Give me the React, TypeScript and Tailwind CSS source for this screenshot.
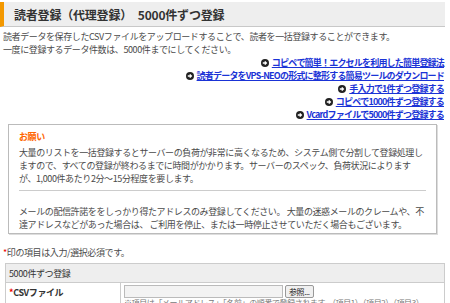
import React from "react";

const Bullet = () => (
  <svg width="8" height="8" viewBox="0 0 8 8" className="mr-[3px] shrink-0">
    <circle cx="4" cy="4" r="4" fill="#222" />
    <path d="M1.8 4 H5.2 M3.8 2.4 L5.4 4 L3.8 5.6" stroke="#fff" strokeWidth="1.3" fill="none" />
  </svg>
);

const links = [
  "コピペで簡単！エクセルを利用した簡単登録法",
  "読者データをVPS-NEOの形式に整形する簡易ツールのダウンロード",
  "手入力で1件ずつ登録する",
  "コピペで1000件ずつ登録する",
  "Vcardファイルで5000件ずつ登録する",
];

export default function App() {
  return (
    <div
      className="w-[450px] h-[303px] overflow-hidden bg-white text-[9px] leading-[13px] text-[#4a4a4a]"
      style={{ fontFamily: '"Noto Sans CJK JP", "Noto Sans", sans-serif' }}
    >
      <div className="mt-[2px] mr-[5px] h-[25px] bg-[#eeeeee] border-l-[4px] border-[#f39800] border-b border-b-[#c8c8c8] flex items-center pl-[10px]">
        <span className="text-[12px] font-bold text-[#333] tracking-[-0.2px]">
          読者登録（代理登録）　5000件ずつ登録
        </span>
      </div>
      <div className="px-[3px] mt-[3px] tracking-[-0.4px]">
        <div>読者データを保存したCSVファイルをアップロードすることで、読者を一括登録することができます。</div>
        <div>一度に登録するデータ件数は、5000件までにしてください。</div>
      </div>
      <div className="flex flex-col items-end pr-[6px] tracking-[-0.8px]">
        {links.map((l) => (
          <div key={l} className="flex items-center">
            <Bullet />
            <a className="text-[#1a33d6] font-bold underline">{l}</a>
          </div>
        ))}
      </div>
      <div className="ml-[8px] mr-[13px] mt-[3px] border border-[#bbb] shadow-[1px_1px_0_#ddd] px-[10px] pt-[5px] pb-[2px] tracking-[-0.4px]">
        <div className="text-[#ff6600] font-bold">お願い</div>
        <div className="mt-[3px]">
          大量のリストを一括登録するとサーバーの負荷が非常に高くなるため、システム側で分割して登録処理しますので、すべての登録が終わるまでに時間がかかります。サーバーのスペック、負荷状況によりますが、1,000件あたり2分～15分程度を要します。
        </div>
        <div className="border-t border-[#ccc] mt-[5px] mb-[14px]" />
        <div>
          メールの配信許諾ををしっかり得たアドレスのみ登録してください。 大量の迷惑メールのクレームや、不達アドレスなどがあった場合は、 ご利用を停止、または一時停止させていただく場合もございます。
        </div>
      </div>
      <div className="px-[3px] mt-[12px] tracking-[-0.4px]">
        <span className="text-[#e00]">*</span>印の項目は入力/選択必須です。
      </div>
      <div className="ml-[5px] mr-[5px] mt-[4px] border border-[#ccc] tracking-[-0.4px]">
        <div className="h-[19px] bg-[#eeeeee] border-b border-[#ccc] flex items-center pl-[3px] text-[#333]">
          5000件ずつ登録
        </div>
        <div className="flex">
          <div className="w-[115px] border-r border-[#ccc] pl-[3px] pt-[3px] font-bold text-[#333]">
            <span className="text-[#e00]">*</span>CSVファイル
          </div>
          <div className="flex-1 pl-[3px] pt-[2px]">
            <div className="flex items-center gap-[2px]">
              <div className="w-[159px] h-[13px] bg-[#f3f3f3] border border-[#bbb]" />
              <div className="h-[13px] px-[3px] border border-[#999] rounded-[2px] bg-[#f0f0f0] text-[8px] leading-[11px] text-[#222]">
                参照...
              </div>
            </div>
            <div className="text-[8px] leading-[10px] text-[#777] whitespace-nowrap">
              ※項目は「メールアドレス」「名前」の順番で登録されます。（項目1）（項目2）（項目3）
            </div>
          </div>
        </div>
      </div>
    </div>
  );
}
